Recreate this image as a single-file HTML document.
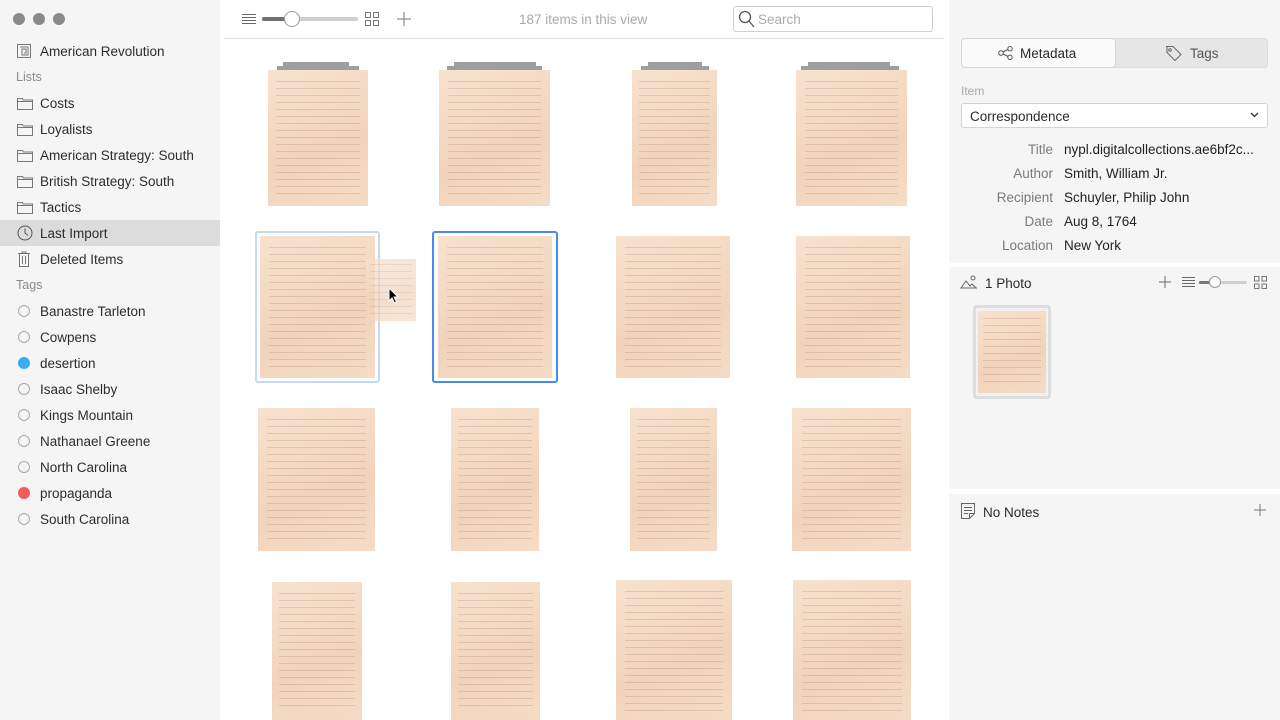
<!DOCTYPE html>
<html><head><meta charset="utf-8"><style>
*{box-sizing:border-box;margin:0;padding:0}
body{width:1280px;height:720px;overflow:hidden;font-family:"Liberation Sans",sans-serif;background:#fff;position:relative;color:#2a2a2a}
.side{position:absolute;left:0;top:0;width:220px;height:720px;background:#f5f5f5}
.dot{position:absolute;top:13px;width:12px;height:12px;border-radius:50%;background:#8a8a8a}
.item{position:absolute;left:0;width:220px;height:26px;font-size:13.5px;line-height:27px;padding-left:40px;color:#2c2c2c}
.hdr{position:absolute;left:16px;font-size:12.5px;color:#8a8a8a}
.ico{position:absolute;left:17px;top:6px}
.circ{position:absolute;left:18px;top:7px;width:12px;height:12px;border-radius:50%;border:1px solid #a8a8a8}
.main{position:absolute;left:220px;top:0;width:729px;height:720px;background:#fff}
.p{position:absolute;background:linear-gradient(160deg,#f7e2cf,#f1d3bb 60%,#f5dcc6);overflow:hidden}
.p::after{content:"";position:absolute;left:8%;right:8%;top:8%;bottom:6%;background:repeating-linear-gradient(180deg,rgba(110,70,50,.16) 0 1px,transparent 1px 7px)}
.bar{position:absolute;height:4px;background:#9e9e9e}
.right{position:absolute;left:949px;top:0;width:331px;height:720px;background:#f5f5f5}
.lbl{position:absolute;width:104px;text-align:right;font-size:13.5px;color:#7a7a7a}
.val{position:absolute;left:115px;font-size:13.5px;color:#222}
</style></head><body>
<div class="side">
 <div class="dot" style="left:13px"></div><div class="dot" style="left:33px"></div><div class="dot" style="left:53px"></div>
 <div class="item" style="top:38px"><svg class="ico" width="14" height="14" viewBox="0 0 14 14" fill="none" stroke="#777"><rect x=".5" y=".5" width="13" height="13"/><path d="M3 3h8v8H5V5h4v4H7"/></svg>American Revolution</div>
 <div class="hdr" style="top:70px">Lists</div>
 <div class="item" style="top:90px"><svg class="ico" width="16" height="14" viewBox="0 0 16 14" fill="none" stroke="#777"><path d="M.5 2.5h5l1 1.5h9v9.5H.5z M.5 5.5h15"/></svg>Costs</div>
 <div class="item" style="top:116px"><svg class="ico" width="16" height="14" viewBox="0 0 16 14" fill="none" stroke="#777"><path d="M.5 2.5h5l1 1.5h9v9.5H.5z M.5 5.5h15"/></svg>Loyalists</div>
 <div class="item" style="top:142px"><svg class="ico" width="16" height="14" viewBox="0 0 16 14" fill="none" stroke="#777"><path d="M.5 2.5h5l1 1.5h9v9.5H.5z M.5 5.5h15"/></svg>American Strategy: South</div>
 <div class="item" style="top:168px"><svg class="ico" width="16" height="14" viewBox="0 0 16 14" fill="none" stroke="#777"><path d="M.5 2.5h5l1 1.5h9v9.5H.5z M.5 5.5h15"/></svg>British Strategy: South</div>
 <div class="item" style="top:194px"><svg class="ico" width="16" height="14" viewBox="0 0 16 14" fill="none" stroke="#777"><path d="M.5 2.5h5l1 1.5h9v9.5H.5z M.5 5.5h15"/></svg>Tactics</div>
 <div class="item" style="top:220px;background:#dcdcdc"><svg class="ico" width="16" height="16" viewBox="0 0 16 16" fill="none" stroke="#555" style="top:5px"><circle cx="8" cy="8" r="7"/><path d="M8 3.5V8l3 2.5"/></svg>Last Import</div>
 <div class="item" style="top:246px"><svg class="ico" width="14" height="16" viewBox="0 0 14 16" fill="none" stroke="#777" style="top:5px"><path d="M1 2.5h12M5 2.5V1h4v1.5M2.5 2.5v13h9v-13M5.5 5v8M8.5 5v8"/></svg>Deleted Items</div>
 <div class="hdr" style="top:278px">Tags</div>
 <div class="item" style="top:298px"><span class="circ"></span>Banastre Tarleton</div>
 <div class="item" style="top:324px"><span class="circ"></span>Cowpens</div>
 <div class="item" style="top:350px"><span class="circ" style="background:#3aacf5;border-color:#3aacf5"></span>desertion</div>
 <div class="item" style="top:376px"><span class="circ"></span>Isaac Shelby</div>
 <div class="item" style="top:402px"><span class="circ"></span>Kings Mountain</div>
 <div class="item" style="top:428px"><span class="circ"></span>Nathanael Greene</div>
 <div class="item" style="top:454px"><span class="circ"></span>North Carolina</div>
 <div class="item" style="top:480px"><span class="circ" style="background:#f55a5a;border-color:#f55a5a"></span>propaganda</div>
 <div class="item" style="top:506px"><span class="circ"></span>South Carolina</div>
</div>

<div class="main">
 <svg style="position:absolute;left:22px;top:13px" width="14" height="12" viewBox="0 0 14 12" stroke="#666"><path d="M0 1.5h14M0 4.5h14M0 7.5h14M0 10.5h14"/></svg>
 <div style="position:absolute;left:42px;top:17px;width:96px;height:4px;border-radius:2px;background:#cfcfcf"></div>
 <div style="position:absolute;left:42px;top:17px;width:28px;height:4px;border-radius:2px;background:#707070"></div>
 <div style="position:absolute;left:64px;top:11px;width:16px;height:16px;border-radius:50%;background:#fff;border:1px solid #999"></div>
 <svg style="position:absolute;left:145px;top:12px" width="14" height="14" viewBox="0 0 14 14" fill="none" stroke="#777"><rect x=".5" y=".5" width="5" height="5"/><rect x="8.5" y=".5" width="5" height="5"/><rect x=".5" y="8.5" width="5" height="5"/><rect x="8.5" y="8.5" width="5" height="5"/></svg>
 <svg style="position:absolute;left:177px;top:12px" width="14" height="14" stroke="#777"><path d="M7 0v14M0 7h14"/></svg>
 <div style="position:absolute;left:299px;top:12px;font-size:13.5px;color:#aaa">187 items in this view</div>
 <div style="position:absolute;left:513px;top:6px;width:200px;height:26px;border:1px solid #d0d0d0;border-radius:3px;background:#fff"></div>
 <svg style="position:absolute;left:518px;top:10px" width="17" height="18" fill="none" stroke="#555" stroke-width="1.3"><circle cx="7" cy="7" r="5.5"/><path d="M11 11l5 6"/></svg>
 <div style="position:absolute;left:538px;top:12px;font-size:13.5px;color:#aaa">Search</div>
 <div style="position:absolute;left:4px;top:38px;width:720px;height:1px;background:#e0e0e0"></div>
</div>

<div class="bar" style="left:283px;top:62px;width:66px"></div><div class="bar" style="left:277px;top:66px;width:82px"></div>
<div class="p" style="left:268px;top:70px;width:100px;height:136px"></div>
<div class="bar" style="left:454px;top:62px;width:82px"></div><div class="bar" style="left:447px;top:66px;width:95px"></div>
<div class="p" style="left:439px;top:70px;width:111px;height:136px"></div>
<div class="bar" style="left:648px;top:62px;width:54px"></div><div class="bar" style="left:641px;top:66px;width:68px"></div>
<div class="p" style="left:632px;top:70px;width:85px;height:136px"></div>
<div class="bar" style="left:808px;top:62px;width:82px"></div><div class="bar" style="left:801px;top:66px;width:98px"></div>
<div class="p" style="left:796px;top:70px;width:111px;height:136px"></div>

<div style="position:absolute;left:255px;top:231px;width:125px;height:152px;border:2px solid #c5d8f5;border-radius:3px"></div>
<div class="p" style="left:260px;top:236px;width:115px;height:142px"></div>
<div class="p" style="left:366px;top:259px;width:50px;height:62px;opacity:.7"></div>
<svg style="position:absolute;left:388px;top:287px" width="12" height="17" viewBox="0 0 12 17"><path d="M1 1v13l3-3 2.5 5 2-1-2.5-5h4z" fill="#000" stroke="#fff"/></svg>
<div style="position:absolute;left:432px;top:231px;width:126px;height:152px;border:2px solid #4a8ae8;border-radius:3px"></div>
<div class="p" style="left:438px;top:236px;width:114px;height:142px"></div>
<div class="p" style="left:616px;top:236px;width:114px;height:142px"></div>
<div class="p" style="left:796px;top:236px;width:114px;height:142px"></div>

<div class="p" style="left:258px;top:408px;width:117px;height:143px"></div>
<div class="p" style="left:451px;top:408px;width:88px;height:143px"></div>
<div class="p" style="left:630px;top:408px;width:87px;height:143px"></div>
<div class="p" style="left:792px;top:408px;width:119px;height:143px"></div>

<div class="p" style="left:272px;top:582px;width:90px;height:138px"></div>
<div class="p" style="left:451px;top:582px;width:89px;height:138px"></div>
<div class="p" style="left:616px;top:580px;width:116px;height:140px"></div>
<div class="p" style="left:793px;top:580px;width:118px;height:140px"></div>

<div class="right">
 <div style="position:absolute;left:12px;top:38px;width:307px;height:30px;border-radius:4px;background:#e6e6e6;border:1px solid #ddd"></div>
 <div style="position:absolute;left:12px;top:38px;width:155px;height:30px;border-radius:4px;background:#fafafa;border:1px solid #d6d6d6"></div>
 <svg style="position:absolute;left:49px;top:46px" width="16" height="14" fill="none" stroke="#555"><circle cx="3" cy="7" r="2.3"/><circle cx="12" cy="2.7" r="2.2"/><circle cx="12" cy="11.3" r="2.2"/><path d="M5 6l5-2.5M5 8l5 2.5"/></svg>
 <div style="position:absolute;left:71px;top:46px;font-size:13.5px">Metadata</div>
 <svg style="position:absolute;left:216px;top:45px" width="17" height="16" fill="none" stroke="#666"><path d="M1 1.5h7l8 8-6 6-8-8V1.5z"/><circle cx="5" cy="5" r="1.3"/></svg>
 <div style="position:absolute;left:241px;top:46px;font-size:13.5px;color:#555">Tags</div>
 <div style="position:absolute;left:12px;top:84px;font-size:12px;color:#aaa">Item</div>
 <div style="position:absolute;left:12px;top:103px;width:307px;height:25px;background:#fff;border:1px solid #d4d4d4;border-radius:3px"></div>
 <div style="position:absolute;left:21px;top:109px;font-size:13.5px">Correspondence</div>
 <svg style="position:absolute;left:301px;top:112px" width="9" height="6" fill="none" stroke="#333" stroke-width="1.3"><path d="M1 1l3.5 3.5L8 1"/></svg>
 <div class="lbl" style="top:142px">Title</div><div class="val" style="top:142px">nypl.digitalcollections.ae6bf2c...</div>
 <div class="lbl" style="top:166px">Author</div><div class="val" style="top:166px">Smith, William Jr.</div>
 <div class="lbl" style="top:190px">Recipient</div><div class="val" style="top:190px">Schuyler, Philip John</div>
 <div class="lbl" style="top:214px">Date</div><div class="val" style="top:214px">Aug 8, 1764</div>
 <div class="lbl" style="top:238px">Location</div><div class="val" style="top:238px">New York</div>
 <div style="position:absolute;left:0;top:263px;width:331px;height:4px;background:#fff"></div>
 <svg style="position:absolute;left:11px;top:275px" width="18" height="14" fill="none" stroke="#666"><path d="M1 13l5-7 4 5 2-2 4 4zM1 13h16"/><circle cx="13" cy="3" r="2"/></svg>
 <div style="position:absolute;left:36px;top:276px;font-size:13.5px">1 Photo</div>
 <svg style="position:absolute;left:210px;top:276px" width="12" height="12" stroke="#666"><path d="M6 0v12M0 6h12"/></svg>
 <svg style="position:absolute;left:233px;top:277px" width="13" height="11" stroke="#666"><path d="M0 .5h13M0 3.5h13M0 6.5h13M0 9.5h13"/></svg>
 <div style="position:absolute;left:250px;top:281px;width:48px;height:3px;background:#d0d0d0;border-radius:2px"></div>
 <div style="position:absolute;left:250px;top:281px;width:12px;height:3px;background:#777;border-radius:2px"></div>
 <div style="position:absolute;left:260px;top:276px;width:12px;height:12px;border-radius:50%;background:#fff;border:1px solid #999"></div>
 <svg style="position:absolute;left:305px;top:276px" width="13" height="13" fill="none" stroke="#777"><rect x=".5" y=".5" width="4.5" height="4.5"/><rect x="8" y=".5" width="4.5" height="4.5"/><rect x=".5" y="8" width="4.5" height="4.5"/><rect x="8" y="8" width="4.5" height="4.5"/></svg>
 <div style="position:absolute;left:24px;top:305px;width:78px;height:94px;border:3px solid #ddd;border-radius:3px;background:#f2f2f2"></div>
 <div class="p" style="left:29px;top:311px;width:68px;height:82px"></div>
 <div style="position:absolute;left:0;top:489px;width:331px;height:5px;background:#fff"></div>
 <svg style="position:absolute;left:12px;top:503px" width="14" height="16" fill="none" stroke="#666"><path d="M.5.5h13v10l-5 5H.5zM8.5 15.5v-5h5M3 4.5h8M3 7.5h8M3 10.5h4"/></svg>
 <div style="position:absolute;left:34px;top:505px;font-size:13.5px">No Notes</div>
 <svg style="position:absolute;left:305px;top:504px" width="12" height="12" stroke="#777"><path d="M6 0v12M0 6h12"/></svg>
</div>
</body></html>
